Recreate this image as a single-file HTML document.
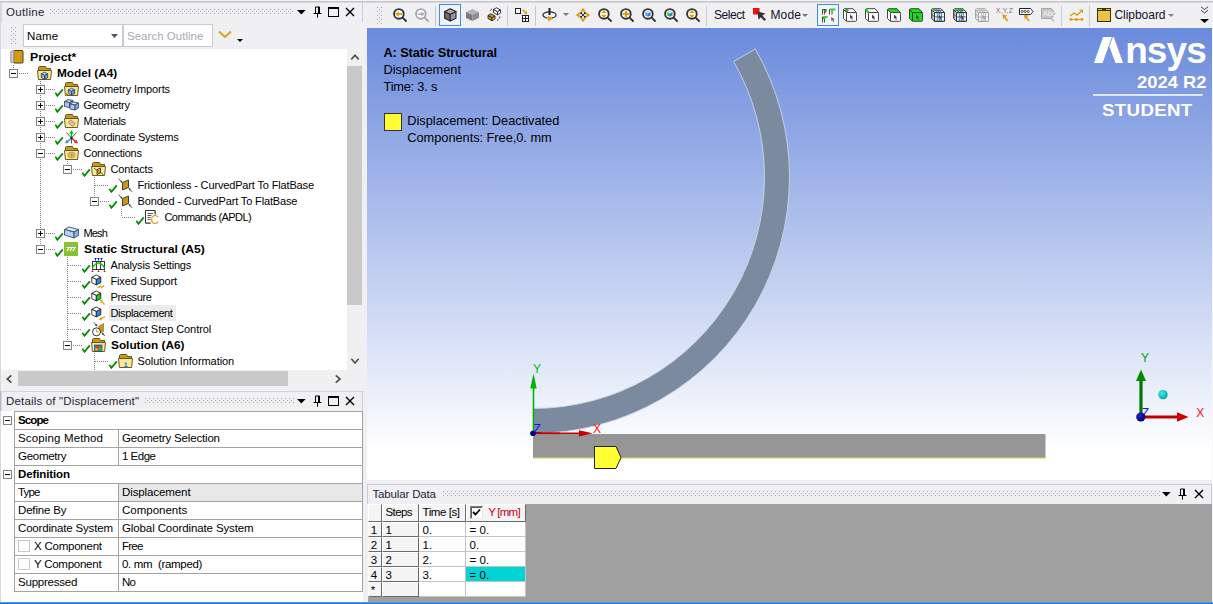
<!DOCTYPE html>
<html><head><meta charset="utf-8"><title>Mechanical</title>
<style>
html,body{margin:0;padding:0;overflow:hidden}
body{width:1213px;height:604px;overflow:hidden;position:relative;background:#f0f0f2;font-family:"Liberation Sans",sans-serif;font-size:12px;color:#000}
div,span,svg{position:absolute;box-sizing:border-box}
.t{white-space:pre;line-height:16px;height:16px}
.tree .t{font-size:11px}
.b{font-weight:bold}
.lg::first-letter{letter-spacing:5.4px;text-shadow:0.6px 0 #fff,1.2px 0 #fff,1.8px 0 #fff,2.4px 0 #fff,3px 0 #fff,3.5px 0 #fff,4px 0 #fff}
</style></head><body>
<svg style="left:0;top:0" width="0" height="0"><defs><pattern id="dp" width="4" height="4" patternUnits="userSpaceOnUse"><rect x="0" y="0" width="1" height="1" fill="#a4a4a8"/><rect x="2" y="2" width="1" height="1" fill="#a4a4a8"/></pattern></defs></svg>

<div style="left:0;top:0;width:1213px;height:1px;background:#f4f4f4"></div><div style="left:0;top:1px;width:1213px;height:1px;background:#c6c6c8"></div><div style="left:0;top:2px;width:1213px;height:1px;background:#d8d8e0"></div>
<div style="left:0;top:2px;width:1px;height:20px;background:#b8b8cc"></div><div style="left:1px;top:2px;width:1px;height:20px;background:#d4d4e0"></div>
<div style="left:362px;top:2px;width:1px;height:20px;background:#cdd0e0"></div>
<span class="t" style="left:6px;top:3px;font-size:11.5px;letter-spacing:0.327px;color:#1e1e3c;line-height:18px;height:18px">Outline</span>
<svg style="position:absolute;left:50px;top:9px" width="243" height="5" shape-rendering="crispEdges"><rect width="243" height="5" fill="url(#dp)"/></svg>
<svg style="position:absolute;left:297.2px;top:10px" width="8.6" height="4.6" viewBox="0 0 8.6 4.6"><polygon points="0,0 8.6,0 4.3,4.6" fill="#000"/></svg><svg style="position:absolute;left:312.9px;top:6px" width="9" height="12" viewBox="0 0 9 12"><path d="M2.5 7V1H6.5V7M5.5 1V7M0.5 7.5H8.5M4.5 8V11.6" stroke="#000" stroke-width="1" fill="none"/></svg><div style="position:absolute;left:328.2px;top:7px;width:11px;height:10px;border:1px solid #000;border-top-width:2px"></div><svg style="position:absolute;left:344.8px;top:6.5px" width="10" height="10" viewBox="0 0 10 10"><path d="M1 1L9 9M9 1L1 9" stroke="#000" stroke-width="1.4"/></svg>
<svg style="position:absolute;left:11px;top:27px" width="5" height="17" shape-rendering="crispEdges"><rect width="5" height="17" fill="url(#dp)"/></svg>
<div style="left:23px;top:24px;width:100px;height:23px;background:#fff;border:1px solid #c8c8d8"></div>
<span class="t" style="left:27px;top:27px;font-size:11.5px;letter-spacing:0.141px;line-height:18px;height:18px">Name</span>
<svg style="position:absolute;left:111px;top:34px" width="7" height="4" viewBox="0 0 7 4"><polygon points="0,0 7,0 3.5,4" fill="#555"/></svg>
<div style="left:123px;top:24px;width:90px;height:23px;background:#fff;border:1px solid #c8c8d8"></div>
<span class="t" style="left:127px;top:27px;font-size:11.5px;letter-spacing:0.025px;line-height:18px;height:18px;color:#a8a8b0">Search Outline</span>
<svg style="left:218px;top:30px" width="14" height="9" viewBox="0 0 14 9"><path d="M1 1.5L7 7L13 1.5" stroke="#d4a017" stroke-width="1.8" fill="none"/></svg>
<svg style="position:absolute;left:237px;top:39px" width="6" height="3" viewBox="0 0 6 3"><polygon points="0,0 6,0 3.0,3" fill="#000"/></svg>
<div class="tree" style="left:1px;top:49px;width:346px;height:321px;background:#fff;overflow:hidden">
<div style="left:12px;top:16px;width:1px;height:5px;background-image:linear-gradient(180deg,#808080 1px,transparent 1px);background-size:1px 2px"></div>
<div style="left:18px;top:24px;width:10px;height:1px;background-image:linear-gradient(90deg,#808080 1px,transparent 1px);background-size:2px 1px"></div>
<div style="left:39px;top:32px;width:1px;height:164px;background-image:linear-gradient(180deg,#808080 1px,transparent 1px);background-size:1px 2px"></div>
<div style="left:45px;top:40px;width:10px;height:1px;background-image:linear-gradient(90deg,#808080 1px,transparent 1px);background-size:2px 1px"></div>
<div style="left:45px;top:56px;width:10px;height:1px;background-image:linear-gradient(90deg,#808080 1px,transparent 1px);background-size:2px 1px"></div>
<div style="left:45px;top:72px;width:10px;height:1px;background-image:linear-gradient(90deg,#808080 1px,transparent 1px);background-size:2px 1px"></div>
<div style="left:45px;top:88px;width:10px;height:1px;background-image:linear-gradient(90deg,#808080 1px,transparent 1px);background-size:2px 1px"></div>
<div style="left:45px;top:104px;width:10px;height:1px;background-image:linear-gradient(90deg,#808080 1px,transparent 1px);background-size:2px 1px"></div>
<div style="left:45px;top:184px;width:10px;height:1px;background-image:linear-gradient(90deg,#808080 1px,transparent 1px);background-size:2px 1px"></div>
<div style="left:45px;top:200px;width:10px;height:1px;background-image:linear-gradient(90deg,#808080 1px,transparent 1px);background-size:2px 1px"></div>
<div style="left:66px;top:112px;width:1px;height:4px;background-image:linear-gradient(180deg,#808080 1px,transparent 1px);background-size:1px 2px"></div>
<div style="left:72px;top:120px;width:10px;height:1px;background-image:linear-gradient(90deg,#808080 1px,transparent 1px);background-size:2px 1px"></div>
<div style="left:93px;top:128px;width:1px;height:20px;background-image:linear-gradient(180deg,#808080 1px,transparent 1px);background-size:1px 2px"></div>
<div style="left:94px;top:136px;width:14px;height:1px;background-image:linear-gradient(90deg,#808080 1px,transparent 1px);background-size:2px 1px"></div>
<div style="left:99px;top:152px;width:10px;height:1px;background-image:linear-gradient(90deg,#808080 1px,transparent 1px);background-size:2px 1px"></div>
<div style="left:120px;top:160px;width:1px;height:8px;background-image:linear-gradient(180deg,#808080 1px,transparent 1px);background-size:1px 2px"></div>
<div style="left:121px;top:168px;width:14px;height:1px;background-image:linear-gradient(90deg,#808080 1px,transparent 1px);background-size:2px 1px"></div>
<div style="left:66px;top:208px;width:1px;height:84px;background-image:linear-gradient(180deg,#808080 1px,transparent 1px);background-size:1px 2px"></div>
<div style="left:67px;top:216px;width:14px;height:1px;background-image:linear-gradient(90deg,#808080 1px,transparent 1px);background-size:2px 1px"></div>
<div style="left:67px;top:232px;width:14px;height:1px;background-image:linear-gradient(90deg,#808080 1px,transparent 1px);background-size:2px 1px"></div>
<div style="left:67px;top:248px;width:14px;height:1px;background-image:linear-gradient(90deg,#808080 1px,transparent 1px);background-size:2px 1px"></div>
<div style="left:67px;top:264px;width:14px;height:1px;background-image:linear-gradient(90deg,#808080 1px,transparent 1px);background-size:2px 1px"></div>
<div style="left:67px;top:280px;width:14px;height:1px;background-image:linear-gradient(90deg,#808080 1px,transparent 1px);background-size:2px 1px"></div>
<div style="left:72px;top:296px;width:10px;height:1px;background-image:linear-gradient(90deg,#808080 1px,transparent 1px);background-size:2px 1px"></div>
<div style="left:93px;top:304px;width:1px;height:17px;background-image:linear-gradient(180deg,#808080 1px,transparent 1px);background-size:1px 2px"></div>
<div style="left:94px;top:312px;width:14px;height:1px;background-image:linear-gradient(90deg,#808080 1px,transparent 1px);background-size:2px 1px"></div>
<svg style="left:9px;top:1px" width="16" height="16" viewBox="0 0 16 16"><rect x="3.5" y="0.5" width="9.5" height="12.5" rx="1" fill="#d19a12" stroke="#4a3a10"/><rect x="0.8" y="0.8" width="3" height="12" rx="1.2" fill="#e8e8e8" stroke="#777" stroke-width="0.8"/><path d="M1 3h2.6M1 5h2.6M1 7h2.6M1 9h2.6M1 11h2.6" stroke="#999" stroke-width="0.6"/></svg>
<span class="t" style="left:29px;top:0px;font-size:11px;font-weight:bold;transform-origin:0 50%;transform:scaleX(1.1137);">Project*</span>
<svg style="left:8.0px;top:20.0px" width="9" height="9" viewBox="0 0 9 9"><rect x="0.5" y="0.5" width="8" height="8" fill="#fff" stroke="#848484"/><path d="M2 4.5h5" stroke="#000"/></svg>
<svg style="left:36px;top:17px" width="16" height="16" viewBox="0 0 16 16"><path d="M1.5 4.5V1.2L2.5 0.5H8.5L9.5 2.5H13.5V4.5Z" fill="#c8981c" stroke="#5a4a20" stroke-width="0.9" stroke-linejoin="round"/><path d="M0.5 4.5H14.5L13.6 13.5H1.4Z" fill="#f8ea90" stroke="#5a4a20" stroke-width="0.9" stroke-linejoin="round"/><g transform="translate(4.3,6.2) scale(0.64)"><polygon points="0,2.5 5,0 10,2.5 5,5" fill="#bcd8f5" stroke="#345" stroke-width="1.3"/><polygon points="0,2.5 5,5 5,11 0,8.5" fill="#8fb8e8" stroke="#345" stroke-width="1.3"/><polygon points="5,5 10,2.5 10,8.5 5,11" fill="#6a9adf" stroke="#345" stroke-width="1.3"/></g></svg>
<span class="t" style="left:56px;top:16px;font-size:11px;font-weight:bold;transform-origin:0 50%;transform:scaleX(1.0726);">Model (A4)</span>
<svg style="left:35.0px;top:36.0px" width="9" height="9" viewBox="0 0 9 9"><rect x="0.5" y="0.5" width="8" height="8" fill="#fff" stroke="#848484"/><path d="M2 4.5h5" stroke="#000"/><path d="M4.5 2v5" stroke="#000"/></svg>
<svg style="left:54px;top:38px" width="9" height="10" viewBox="0 0 9 10"><path d="M0.3 5.7L2.4 8.8L7.8 2.3" stroke="#088a08" stroke-width="1.8" fill="none"/></svg>
<svg style="left:63px;top:33px" width="16" height="16" viewBox="0 0 16 16"><path d="M1.5 4.5V1.2L2.5 0.5H8.5L9.5 2.5H13.5V4.5Z" fill="#c8981c" stroke="#5a4a20" stroke-width="0.9" stroke-linejoin="round"/><path d="M0.5 4.5H14.5L13.6 13.5H1.4Z" fill="#f8ea90" stroke="#5a4a20" stroke-width="0.9" stroke-linejoin="round"/><g transform="translate(4.3,6.2) scale(0.64)"><polygon points="0,2.5 5,0 10,2.5 5,5" fill="#bcd8f5" stroke="#345" stroke-width="1.3"/><polygon points="0,2.5 5,5 5,11 0,8.5" fill="#8fb8e8" stroke="#345" stroke-width="1.3"/><polygon points="5,5 10,2.5 10,8.5 5,11" fill="#6a9adf" stroke="#345" stroke-width="1.3"/></g><path d="M1 12.5h3M2.5 11v3" stroke="#c08010" stroke-width="1"/></svg>
<span class="t" style="left:82.5px;top:32px;font-size:11px;letter-spacing:-0.095px;">Geometry Imports</span>
<svg style="left:35.0px;top:52.0px" width="9" height="9" viewBox="0 0 9 9"><rect x="0.5" y="0.5" width="8" height="8" fill="#fff" stroke="#848484"/><path d="M2 4.5h5" stroke="#000"/><path d="M4.5 2v5" stroke="#000"/></svg>
<svg style="left:54px;top:54px" width="9" height="10" viewBox="0 0 9 10"><path d="M0.3 5.7L2.4 8.8L7.8 2.3" stroke="#088a08" stroke-width="1.8" fill="none"/></svg>
<svg style="left:63px;top:49px" width="16" height="16" viewBox="0 0 16 16"><g stroke="#3a4a66" stroke-width="0.9" stroke-linejoin="round"><polygon points="0.5,3.5 4,1.5 9,2.5 5.5,4.5" fill="#d4e5fb"/><polygon points="0.5,3.5 5.5,4.5 5.5,9.5 0.5,8.5" fill="#a9c9f2"/><polygon points="5.5,4.5 9,2.5 9,7.5 5.5,9.5" fill="#7eaae6"/><polygon points="6,6 9.5,4 14.5,5 11,7" fill="#d4e5fb"/><polygon points="6,6 11,7 11,12 6,11" fill="#a9c9f2"/><polygon points="11,7 14.5,5 14.5,10 11,12" fill="#7eaae6"/></g></svg>
<span class="t" style="left:82.5px;top:48px;font-size:11px;letter-spacing:-0.27px;">Geometry</span>
<svg style="left:35.0px;top:68.0px" width="9" height="9" viewBox="0 0 9 9"><rect x="0.5" y="0.5" width="8" height="8" fill="#fff" stroke="#848484"/><path d="M2 4.5h5" stroke="#000"/><path d="M4.5 2v5" stroke="#000"/></svg>
<svg style="left:54px;top:70px" width="9" height="10" viewBox="0 0 9 10"><path d="M0.3 5.7L2.4 8.8L7.8 2.3" stroke="#088a08" stroke-width="1.8" fill="none"/></svg>
<svg style="left:63px;top:65px" width="16" height="16" viewBox="0 0 16 16"><path d="M1.5 4.5V1.2L2.5 0.5H8.5L9.5 2.5H13.5V4.5Z" fill="#c8981c" stroke="#5a4a20" stroke-width="0.9" stroke-linejoin="round"/><path d="M0.5 4.5H14.5L13.6 13.5H1.4Z" fill="#f8ea90" stroke="#5a4a20" stroke-width="0.9" stroke-linejoin="round"/><g transform="rotate(40 7.5 9)"><rect x="4.8" y="7" width="6" height="3.8" rx="0.8" fill="#ecb898" stroke="#a87050" stroke-width="0.7"/></g></svg>
<span class="t" style="left:82.5px;top:64px;font-size:11px;letter-spacing:-0.253px;">Materials</span>
<svg style="left:35.0px;top:84.0px" width="9" height="9" viewBox="0 0 9 9"><rect x="0.5" y="0.5" width="8" height="8" fill="#fff" stroke="#848484"/><path d="M2 4.5h5" stroke="#000"/><path d="M4.5 2v5" stroke="#000"/></svg>
<svg style="left:54px;top:86px" width="9" height="10" viewBox="0 0 9 10"><path d="M0.3 5.7L2.4 8.8L7.8 2.3" stroke="#088a08" stroke-width="1.8" fill="none"/></svg>
<svg style="left:63px;top:81px" width="16" height="16" viewBox="0 0 16 16"><path d="M2.5 2.5L7 7.5M12.5 2.5L8 7.5M7.5 8.5v5" stroke="#444" stroke-width="0.9"/><path d="M7.5 8V3" stroke="#10b010" stroke-width="1.3"/><polygon points="7.5,0 5.3,3.8 9.7,3.8" fill="#10c010"/><path d="M7.5 8L11.5 11.5" stroke="#e01010" stroke-width="1.3"/><polygon points="14,13.4 9.9,12.6 12.6,9.7" fill="#f01818"/><path d="M7.5 8L3.5 11.5" stroke="#3080e0" stroke-width="1.3"/><polygon points="1,13.4 5.1,12.6 2.4,9.7" fill="#3a8cf0"/><circle cx="7.5" cy="8" r="1.2" fill="#222"/></svg>
<span class="t" style="left:82.5px;top:80px;font-size:11px;letter-spacing:-0.226px;">Coordinate Systems</span>
<svg style="left:35.0px;top:100.0px" width="9" height="9" viewBox="0 0 9 9"><rect x="0.5" y="0.5" width="8" height="8" fill="#fff" stroke="#848484"/><path d="M2 4.5h5" stroke="#000"/></svg>
<svg style="left:54px;top:102px" width="9" height="10" viewBox="0 0 9 10"><path d="M0.3 5.7L2.4 8.8L7.8 2.3" stroke="#088a08" stroke-width="1.8" fill="none"/></svg>
<svg style="left:63px;top:97px" width="16" height="16" viewBox="0 0 16 16"><path d="M1.5 4.5V1.2L2.5 0.5H8.5L9.5 2.5H13.5V4.5Z" fill="#c8981c" stroke="#5a4a20" stroke-width="0.9" stroke-linejoin="round"/><path d="M0.5 4.5H14.5L13.6 13.5H1.4Z" fill="#f8ea90" stroke="#5a4a20" stroke-width="0.9" stroke-linejoin="round"/><ellipse cx="7.5" cy="9" rx="3.8" ry="2.8" fill="#ecd070" stroke="#b08828" stroke-width="0.7"/><path d="M4.5 9h6M7.5 6.8v4.4M5.2 7.4l4.6 3.2M9.8 7.4l-4.6 3.2" stroke="#b08828" stroke-width="0.5"/></svg>
<span class="t" style="left:82.5px;top:96px;font-size:11px;letter-spacing:-0.275px;">Connections</span>
<svg style="left:35.0px;top:180.0px" width="9" height="9" viewBox="0 0 9 9"><rect x="0.5" y="0.5" width="8" height="8" fill="#fff" stroke="#848484"/><path d="M2 4.5h5" stroke="#000"/><path d="M4.5 2v5" stroke="#000"/></svg>
<svg style="left:54px;top:182px" width="9" height="10" viewBox="0 0 9 10"><path d="M0.3 5.7L2.4 8.8L7.8 2.3" stroke="#088a08" stroke-width="1.8" fill="none"/></svg>
<svg style="left:63px;top:177px" width="16" height="16" viewBox="0 0 16 16"><g stroke="#3a4a66" stroke-width="0.9" stroke-linejoin="round"><polygon points="0.5,3.5 5,1 14.5,3.5 10,6" fill="#dbe9fb"/><polygon points="0.5,3.5 10,6 10,12 0.5,9" fill="#b7d2f4"/><polygon points="10,6 14.5,3.5 14.5,9.5 10,12" fill="#8cb4ea"/></g></svg>
<span class="t" style="left:82.5px;top:176px;font-size:11px;letter-spacing:-0.833px;">Mesh</span>
<svg style="left:35.0px;top:196.0px" width="9" height="9" viewBox="0 0 9 9"><rect x="0.5" y="0.5" width="8" height="8" fill="#fff" stroke="#848484"/><path d="M2 4.5h5" stroke="#000"/></svg>
<svg style="left:54px;top:198px" width="9" height="10" viewBox="0 0 9 10"><path d="M0.3 5.7L2.4 8.8L7.8 2.3" stroke="#088a08" stroke-width="1.8" fill="none"/></svg>
<svg style="left:63px;top:193px" width="16" height="16" viewBox="0 0 16 16"><rect x="0" y="0" width="14" height="14" fill="#86c232"/><path d="M2.5 5.5h9.5M5 5.5L3 9M8 5.5L6 9M11 5.5L9 9" stroke="#fff" stroke-width="1.2" fill="none"/></svg>
<span class="t" style="left:82.5px;top:192px;font-size:11px;font-weight:bold;transform-origin:0 50%;transform:scaleX(1.1050);">Static Structural (A5)</span>
<svg style="left:62.0px;top:116.0px" width="9" height="9" viewBox="0 0 9 9"><rect x="0.5" y="0.5" width="8" height="8" fill="#fff" stroke="#848484"/><path d="M2 4.5h5" stroke="#000"/></svg>
<svg style="left:81px;top:118px" width="9" height="10" viewBox="0 0 9 10"><path d="M0.3 5.7L2.4 8.8L7.8 2.3" stroke="#088a08" stroke-width="1.8" fill="none"/></svg>
<svg style="left:90px;top:113px" width="16" height="16" viewBox="0 0 16 16"><path d="M1.5 4.5V1.2L2.5 0.5H8.5L9.5 2.5H13.5V4.5Z" fill="#c8981c" stroke="#5a4a20" stroke-width="0.9" stroke-linejoin="round"/><path d="M0.5 4.5H14.5L13.6 13.5H1.4Z" fill="#f8ea90" stroke="#5a4a20" stroke-width="0.9" stroke-linejoin="round"/><polygon points="6,7.5 9.5,6 9.5,11 6,12.5" fill="#c9961c" stroke="#222" stroke-width="0.7"/><path d="M3 6L6 8.5M12.5 13L9.8 10.6" stroke="#333" stroke-width="0.8"/></svg>
<span class="t" style="left:109.5px;top:112px;font-size:11px;letter-spacing:-0.13px;">Contacts</span>
<svg style="left:108px;top:134px" width="9" height="10" viewBox="0 0 9 10"><path d="M0.3 5.7L2.4 8.8L7.8 2.3" stroke="#088a08" stroke-width="1.8" fill="none"/></svg>
<svg style="left:117px;top:129px" width="16" height="16" viewBox="0 0 16 16"><polygon points="4.5,4.5 10.5,2 10.5,9.5 4.5,12" fill="#c9961c" stroke="#333" stroke-width="0.9" stroke-linejoin="round"/><path d="M0.5 0.8L4 4.2M14 13.8L11 10.6" stroke="#333" stroke-width="0.9"/><polygon points="4.6,4.8 2.2,4 3.8,2.4" fill="#333"/><polygon points="10.6,10 12.8,10.8 11.4,12.4" fill="#333"/></svg>
<span class="t" style="left:136.5px;top:128px;font-size:11px;letter-spacing:-0.152px;">Frictionless - CurvedPart To FlatBase</span>
<svg style="left:89.0px;top:148.0px" width="9" height="9" viewBox="0 0 9 9"><rect x="0.5" y="0.5" width="8" height="8" fill="#fff" stroke="#848484"/><path d="M2 4.5h5" stroke="#000"/></svg>
<svg style="left:108px;top:150px" width="9" height="10" viewBox="0 0 9 10"><path d="M0.3 5.7L2.4 8.8L7.8 2.3" stroke="#088a08" stroke-width="1.8" fill="none"/></svg>
<svg style="left:117px;top:145px" width="16" height="16" viewBox="0 0 16 16"><polygon points="4.5,4.5 10.5,2 10.5,9.5 4.5,12" fill="#c9961c" stroke="#333" stroke-width="0.9" stroke-linejoin="round"/><path d="M0.5 0.8L4 4.2M14 13.8L11 10.6" stroke="#333" stroke-width="0.9"/><polygon points="4.6,4.8 2.2,4 3.8,2.4" fill="#333"/><polygon points="10.6,10 12.8,10.8 11.4,12.4" fill="#333"/></svg>
<span class="t" style="left:136.5px;top:144px;font-size:11px;letter-spacing:-0.143px;">Bonded - CurvedPart To FlatBase</span>
<svg style="left:135px;top:166px" width="9" height="10" viewBox="0 0 9 10"><path d="M0.3 5.7L2.4 8.8L7.8 2.3" stroke="#088a08" stroke-width="1.8" fill="none"/></svg>
<svg style="left:144px;top:161px" width="16" height="16" viewBox="0 0 16 16"><path d="M0.5 0.5h9.5v4M0.5 0.5v12.5h5" fill="#fff" stroke="#333" stroke-width="1"/><rect x="0.5" y="0.5" width="9.5" height="12.5" fill="#fff" stroke="none"/><path d="M0.5 13V0.5h9.5v4" fill="none" stroke="#333"/><path d="M0.5 13h5" stroke="#333"/><path d="M2.5 3.5h5.5M2.5 5.5h4M2.5 7.5h3M2.5 9.5h3" stroke="#444" stroke-width="0.9"/><text x="5.6" y="14" font-family="Liberation Sans,sans-serif" font-size="12" fill="#d8a010">C</text></svg>
<span class="t" style="left:163.5px;top:160px;font-size:11px;letter-spacing:-0.59px;">Commands (APDL)</span>
<div style="left:108px;top:256px;width:67px;height:16px;background:#ebebeb"></div>
<svg style="left:81px;top:214px" width="9" height="10" viewBox="0 0 9 10"><path d="M0.3 5.7L2.4 8.8L7.8 2.3" stroke="#088a08" stroke-width="1.8" fill="none"/></svg>
<svg style="left:90px;top:209px" width="16" height="16" viewBox="0 0 16 16"><path d="M1.5 3v9M5.5 3v9M9.5 3v9M13.5 3v9M1.5 3.5h12M1.5 11.5h12" stroke="#222" stroke-width="0.9" fill="none"/><path d="M4.5 0.5v2M7.5 0.5v2M10.5 0.5v2M3.5 0.5h2M6.5 0.5h2M9.5 0.5h2" stroke="#1010e0" stroke-width="1"/><path d="M1 10.5Q7.5 -0.5 14 10.5" stroke="#10c010" stroke-width="1.3" fill="none"/><path d="M1.5 12l-1.2 2h2.4zM7.5 12l-1.2 2h2.4zM13.5 12l-1.2 2h2.4z" fill="#e01010"/></svg>
<span class="t" style="left:109.5px;top:208px;font-size:11px;letter-spacing:-0.185px;">Analysis Settings</span>
<svg style="left:81px;top:230px" width="9" height="10" viewBox="0 0 9 10"><path d="M0.3 5.7L2.4 8.8L7.8 2.3" stroke="#088a08" stroke-width="1.8" fill="none"/></svg>
<svg style="left:90px;top:225px" width="16" height="16" viewBox="0 0 16 16"><g transform="translate(0.8,1) scale(0.9)" stroke="#222" stroke-width="1.0" stroke-linejoin="round"><polygon points="0,2.5 5,0 10,2.5 5,5" fill="#fff"/><polygon points="0,2.5 5,5 5,11 0,8.5" fill="#fff"/><polygon points="5,5 10,2.5 10,8.5 5,11" fill="#2a8ae6"/></g><path d="M7 14L10 11.5M10 14L13 11.5" stroke="#d8a010" stroke-width="1.4"/></svg>
<span class="t" style="left:109.5px;top:224px;font-size:11px;letter-spacing:-0.157px;">Fixed Support</span>
<svg style="left:81px;top:246px" width="9" height="10" viewBox="0 0 9 10"><path d="M0.3 5.7L2.4 8.8L7.8 2.3" stroke="#088a08" stroke-width="1.8" fill="none"/></svg>
<svg style="left:90px;top:241px" width="16" height="16" viewBox="0 0 16 16"><g transform="translate(0.8,1) scale(0.9)" stroke="#222" stroke-width="1.0" stroke-linejoin="round"><polygon points="0,2.5 5,0 10,2.5 5,5" fill="#fff"/><polygon points="0,2.5 5,5 5,11 0,8.5" fill="#fff"/><polygon points="5,5 10,2.5 10,8.5 5,11" fill="#18d018"/></g><path d="M13.5 14.5L10 11" stroke="#d8a010" stroke-width="1.3"/><polygon points="9,10 12.2,10.6 9.6,13.2" fill="#d8a010"/></svg>
<span class="t" style="left:109.5px;top:240px;font-size:11px;letter-spacing:-0.374px;">Pressure</span>
<svg style="left:81px;top:262px" width="9" height="10" viewBox="0 0 9 10"><path d="M0.3 5.7L2.4 8.8L7.8 2.3" stroke="#088a08" stroke-width="1.8" fill="none"/></svg>
<svg style="left:90px;top:257px" width="16" height="16" viewBox="0 0 16 16"><g transform="translate(0.8,1) scale(0.9)" stroke="#222" stroke-width="1.0" stroke-linejoin="round"><polygon points="0,2.5 5,0 10,2.5 5,5" fill="#fff"/><polygon points="0,2.5 5,5 5,11 0,8.5" fill="#fff"/><polygon points="5,5 10,2.5 10,8.5 5,11" fill="#2a8ae6"/></g><path d="M14 10.5L9.5 13" stroke="#d8a010" stroke-width="1.3"/><polygon points="7.5,14 10,10.8 11.4,13.6" fill="#d8a010"/></svg>
<span class="t" style="left:109.5px;top:256px;font-size:11px;letter-spacing:-0.385px;">Displacement</span>
<svg style="left:81px;top:278px" width="9" height="10" viewBox="0 0 9 10"><path d="M0.3 5.7L2.4 8.8L7.8 2.3" stroke="#088a08" stroke-width="1.8" fill="none"/></svg>
<svg style="left:90px;top:273px" width="16" height="16" viewBox="0 0 16 16"><polygon points="7.5,4.5 12.5,1.5 12.5,9.5 10,10.5" fill="#c9961c" stroke="#8a6a10" stroke-width="0.6"/><circle cx="5.5" cy="9.8" r="4" fill="#fff" stroke="#333" stroke-width="1"/><path d="M5.5 7.3v2.7h2.2" stroke="#d8a010" stroke-width="1" fill="none"/><path d="M3 0.5L5.6 3.4M13.8 14L11.4 11.4" stroke="#333" stroke-width="0.9"/><polygon points="6.4,4.4 3.9,3.6 5.6,2" fill="#333"/><polygon points="10.6,10.4 13,11.4 11.4,12.9" fill="#333"/></svg>
<span class="t" style="left:109.5px;top:272px;font-size:11px;letter-spacing:-0.074px;">Contact Step Control</span>
<svg style="left:62.0px;top:292.0px" width="9" height="9" viewBox="0 0 9 9"><rect x="0.5" y="0.5" width="8" height="8" fill="#fff" stroke="#848484"/><path d="M2 4.5h5" stroke="#000"/></svg>
<svg style="left:81px;top:294px" width="9" height="10" viewBox="0 0 9 10"><path d="M0.3 5.7L2.4 8.8L7.8 2.3" stroke="#088a08" stroke-width="1.8" fill="none"/></svg>
<svg style="left:90px;top:289px" width="16" height="16" viewBox="0 0 16 16"><path d="M1.5 4.5V1.2L2.5 0.5H8.5L9.5 2.5H13.5V4.5Z" fill="#c8981c" stroke="#5a4a20" stroke-width="0.9" stroke-linejoin="round"/><path d="M0.5 4.5H14.5L13.6 13.5H1.4Z" fill="#f8ea90" stroke="#5a4a20" stroke-width="0.9" stroke-linejoin="round"/><rect x="3.5" y="7" width="7.5" height="6" fill="#3a7ad0" stroke="#234" stroke-width="0.6"/><rect x="5" y="8" width="3" height="3" fill="#e83030"/><rect x="7.5" y="9.5" width="3" height="3" fill="#30c030"/><rect x="4.2" y="10.5" width="2.5" height="2" fill="#f0d020"/></svg>
<span class="t" style="left:109.5px;top:288px;font-size:11px;font-weight:bold;transform-origin:0 50%;transform:scaleX(1.0740);">Solution (A6)</span>
<svg style="left:108px;top:310px" width="9" height="10" viewBox="0 0 9 10"><path d="M0.3 5.7L2.4 8.8L7.8 2.3" stroke="#088a08" stroke-width="1.8" fill="none"/></svg>
<svg style="left:117px;top:305px" width="16" height="16" viewBox="0 0 16 16"><path d="M1.5 4.5V1.2L2.5 0.5H8.5L9.5 2.5H13.5V4.5Z" fill="#c8981c" stroke="#5a4a20" stroke-width="0.9" stroke-linejoin="round"/><path d="M0.5 4.5H14.5L13.6 13.5H1.4Z" fill="#f8ea90" stroke="#5a4a20" stroke-width="0.9" stroke-linejoin="round"/><text x="5.3" y="13.2" font-family="Liberation Mono,monospace" font-weight="bold" font-size="8" fill="#3a80f0">i</text></svg>
<span class="t" style="left:136.5px;top:304px;font-size:11px;letter-spacing:-0.06px;">Solution Information</span>
</div>
<div style="left:347px;top:49px;width:16px;height:321px;background:#f0f0f0"></div>
<svg style="left:350px;top:53px" width="10" height="8" viewBox="0 0 10 8"><path d="M1.3 6.4L5 2.2L8.7 6.4" stroke="#505050" stroke-width="1.7" fill="none"/></svg>
<svg style="left:350px;top:357px" width="10" height="8" viewBox="0 0 10 8"><path d="M1.3 1.8L5 6L8.7 1.8" stroke="#505050" stroke-width="1.7" fill="none"/></svg>
<div style="left:347px;top:66px;width:15px;height:239px;background:#c9c9c9"></div>
<div style="left:1px;top:370px;width:346px;height:17px;background:#f0f0f0"></div>
<svg style="left:5px;top:374px" width="8" height="10" viewBox="0 0 8 10"><path d="M6.4 1.3L2.2 5L6.4 8.7" stroke="#505050" stroke-width="1.7" fill="none"/></svg>
<svg style="left:334px;top:374px" width="8" height="10" viewBox="0 0 8 10"><path d="M1.8 1.3L6 5L1.8 8.7" stroke="#505050" stroke-width="1.7" fill="none"/></svg>
<div style="left:18px;top:371px;width:270px;height:15px;background:#c9c9c9"></div>
<div style="left:0;top:391px;width:364px;height:1px;background:#d4d4e4"></div>
<div style="left:0;top:2px;width:1px;height:600px;background:#d6d6e4"></div>
<div style="left:1px;top:411px;width:362px;height:191px;background:#fff"></div>
<div style="left:0;top:392px;width:363px;height:19px;border-right:1px solid #c8cce0"></div>
<div style="left:0;top:391px;width:1px;height:20px;background:#b8b8cc"></div><div style="left:1px;top:391px;width:1px;height:20px;background:#d4d4e0"></div>
<span class="t" style="left:6px;top:392px;font-size:11.5px;letter-spacing:0.168px;color:#1e1e3c;line-height:18px;height:18px">Details of "Displacement"</span>
<svg style="position:absolute;left:145px;top:398px" width="149" height="5" shape-rendering="crispEdges"><rect width="149" height="5" fill="url(#dp)"/></svg>
<svg style="position:absolute;left:297.2px;top:399px" width="8.6" height="4.6" viewBox="0 0 8.6 4.6"><polygon points="0,0 8.6,0 4.3,4.6" fill="#000"/></svg><svg style="position:absolute;left:312.9px;top:395px" width="9" height="12" viewBox="0 0 9 12"><path d="M2.5 7V1H6.5V7M5.5 1V7M0.5 7.5H8.5M4.5 8V11.6" stroke="#000" stroke-width="1" fill="none"/></svg><div style="position:absolute;left:328.2px;top:396px;width:11px;height:10px;border:1px solid #000;border-top-width:2px"></div><svg style="position:absolute;left:344.8px;top:395.5px" width="10" height="10" viewBox="0 0 10 10"><path d="M1 1L9 9M9 1L1 9" stroke="#000" stroke-width="1.4"/></svg>
<div style="left:14px;top:411px;width:349px;height:181px;background:#fff;border:1px solid #a3a3a3"></div>
<svg style="left:3px;top:416px" width="9" height="9" viewBox="0 0 9 9"><rect x="0.5" y="0.5" width="8" height="8" fill="#fff" stroke="#848484"/><path d="M2 4.5h5" stroke="#000"/></svg>
<span class="t" style="left:18px;top:411px;font-size:11.5px;font-weight:bold;letter-spacing:-0.878px;line-height:18px;height:18px">Scope</span>
<div style="left:14px;top:429px;width:349px;height:1px;background:#a3a3a3"></div>
<div style="left:118px;top:429px;width:1px;height:18px;background:#a3a3a3"></div>
<span class="t" style="left:18px;top:429px;font-size:11.5px;letter-spacing:0.145px;line-height:18px;height:18px">Scoping Method</span>
<span class="t" style="left:122px;top:429px;font-size:11.5px;letter-spacing:-0.176px;line-height:18px;height:18px">Geometry Selection</span>
<div style="left:14px;top:447px;width:349px;height:1px;background:#a3a3a3"></div>
<div style="left:118px;top:447px;width:1px;height:18px;background:#a3a3a3"></div>
<span class="t" style="left:18px;top:447px;font-size:11.5px;letter-spacing:-0.284px;line-height:18px;height:18px">Geometry</span>
<span class="t" style="left:122px;top:447px;font-size:11.5px;letter-spacing:-0.49px;line-height:18px;height:18px">1 Edge</span>
<div style="left:14px;top:465px;width:349px;height:1px;background:#a3a3a3"></div>
<svg style="left:3px;top:470px" width="9" height="9" viewBox="0 0 9 9"><rect x="0.5" y="0.5" width="8" height="8" fill="#fff" stroke="#848484"/><path d="M2 4.5h5" stroke="#000"/></svg>
<span class="t" style="left:18px;top:465px;font-size:11.5px;font-weight:bold;letter-spacing:-0.113px;line-height:18px;height:18px">Definition</span>
<div style="left:14px;top:483px;width:349px;height:1px;background:#a3a3a3"></div>
<div style="left:119px;top:484px;width:243px;height:17px;background:#e8e8e8"></div>
<div style="left:118px;top:483px;width:1px;height:18px;background:#a3a3a3"></div>
<span class="t" style="left:18px;top:483px;font-size:11.5px;letter-spacing:-0.811px;line-height:18px;height:18px">Type</span>
<span class="t" style="left:122px;top:483px;font-size:11.5px;letter-spacing:-0.097px;line-height:18px;height:18px">Displacement</span>
<div style="left:14px;top:501px;width:349px;height:1px;background:#a3a3a3"></div>
<div style="left:118px;top:501px;width:1px;height:18px;background:#a3a3a3"></div>
<span class="t" style="left:18px;top:501px;font-size:11.5px;letter-spacing:-0.17px;line-height:18px;height:18px">Define By</span>
<span class="t" style="left:122px;top:501px;font-size:11.5px;letter-spacing:-0.0px;line-height:18px;height:18px">Components</span>
<div style="left:14px;top:519px;width:349px;height:1px;background:#a3a3a3"></div>
<div style="left:118px;top:519px;width:1px;height:18px;background:#a3a3a3"></div>
<span class="t" style="left:18px;top:519px;font-size:11.5px;letter-spacing:-0.175px;line-height:18px;height:18px">Coordinate System</span>
<span class="t" style="left:122px;top:519px;font-size:11.5px;letter-spacing:-0.11px;line-height:18px;height:18px">Global Coordinate System</span>
<div style="left:14px;top:537px;width:349px;height:1px;background:#a3a3a3"></div>
<div style="left:118px;top:537px;width:1px;height:18px;background:#a3a3a3"></div>
<div style="left:18px;top:540px;width:12px;height:12px;background:#fff;border:1px solid #c8c8c8"></div>
<span class="t" style="left:34px;top:537px;font-size:11.5px;letter-spacing:-0.232px;line-height:18px;height:18px">X Component</span>
<span class="t" style="left:122px;top:537px;font-size:11.5px;letter-spacing:-0.782px;line-height:18px;height:18px">Free</span>
<div style="left:14px;top:555px;width:349px;height:1px;background:#a3a3a3"></div>
<div style="left:118px;top:555px;width:1px;height:18px;background:#a3a3a3"></div>
<div style="left:18px;top:558px;width:12px;height:12px;background:#fff;border:1px solid #c8c8c8"></div>
<span class="t" style="left:34px;top:555px;font-size:11.5px;letter-spacing:-0.251px;line-height:18px;height:18px">Y Component</span>
<span class="t" style="left:122px;top:555px;font-size:11.5px;letter-spacing:-0.328px;line-height:18px;height:18px">0. mm  (ramped)</span>
<div style="left:14px;top:573px;width:349px;height:1px;background:#a3a3a3"></div>
<div style="left:118px;top:573px;width:1px;height:18px;background:#a3a3a3"></div>
<span class="t" style="left:18px;top:573px;font-size:11.5px;letter-spacing:-0.219px;line-height:18px;height:18px">Suppressed</span>
<span class="t" style="left:122px;top:573px;font-size:11.5px;letter-spacing:-0.801px;line-height:18px;height:18px">No</span>
<svg style="left:377px;top:7px" width="5" height="17" shape-rendering="crispEdges"><rect width="5" height="17" fill="url(#dp)"/></svg>
<svg style="left:393px;top:8px" width="15" height="15" viewBox="0 0 15 15"><circle cx="5.9" cy="5.9" r="4.8" fill="#fff" stroke="#333" stroke-width="1.9"/><path d="M9.6 9.6L13 13" stroke="#333" stroke-width="1.9" stroke-linecap="round"/><path d="M9 6H4" stroke="#d8a010" stroke-width="1.8"/><polygon points="2.2,6 5.6,3.2 5.6,8.8" fill="#d8a010"/></svg>
<svg style="left:415px;top:8px" width="15" height="15" viewBox="0 0 15 15"><circle cx="5.9" cy="5.9" r="4.8" fill="#fff" stroke="#a8a8a8" stroke-width="1.9"/><path d="M9.6 9.6L13 13" stroke="#a8a8a8" stroke-width="1.9" stroke-linecap="round"/><path d="M3 6H8" stroke="#b0b0b0" stroke-width="1.8"/><polygon points="9.8,6 6.4,3.2 6.4,8.8" fill="#b0b0b0"/></svg>
<div style="left:435px;top:6px;width:1px;height:20px;background:#c6c6ce"></div>
<div style="left:439px;top:4px;width:22px;height:22px;background:#f3f3f7;border:1px solid #3b8df0"></div>
<svg style="left:444px;top:8px" width="13" height="14" viewBox="0 0 13 14"><g stroke="#2a2a2a" stroke-width="1.1" stroke-linejoin="round"><polygon points="0.6,3.6 6.3,0.8 12,3.6 6.3,6.4" fill="#aaaaaa"/><polygon points="0.6,3.6 6.3,6.4 6.3,13 0.6,10.2" fill="#6c6c6c"/><polygon points="6.3,6.4 12,3.6 12,10.2 6.3,13" fill="#989898"/></g></svg>
<svg style="left:466px;top:9px" width="13" height="12" viewBox="0 0 13 12"><polygon points="0,3 6.5,0 13,3 6.5,6" fill="#b4b4b4"/><polygon points="0,3 6.5,6 6.5,12 0,9" fill="#7a7a7a"/><polygon points="6.5,6 13,3 13,9 6.5,12" fill="#8e8e8e"/></svg>
<svg style="left:487px;top:7px" width="15" height="15" viewBox="0 0 15 15"><g stroke="#222" stroke-width="0.9" stroke-linejoin="round"><polygon points="6.5,2.5 9.5,0.8 13.5,3 10.5,4.8" fill="#fff"/><polygon points="6.5,2.5 10.5,4.8 10.5,7.8 6.5,5.5" fill="#fff"/><polygon points="10.5,4.8 13.5,3 13.5,6 10.5,7.8" fill="#fff"/><polygon points="1,8.5 4,6.8 8,9 5,10.8" fill="#d8a010"/><polygon points="1,8.5 5,10.8 5,13.8 1,11.5" fill="#d8a010"/><polygon points="5,10.8 8,9 8,12 5,13.8" fill="#f0c030"/></g><path d="M3.5 3.5A6 6 0 0 1 6 1.2" stroke="#222" fill="none" stroke-width="1" stroke-dasharray="2 1.2"/><path d="M13 9.5A6 6 0 0 1 10 13.5" stroke="#222" fill="none" stroke-width="1" stroke-dasharray="2 1.2"/></svg>
<div style="left:507px;top:6px;width:1px;height:20px;background:#c6c6ce"></div>
<svg style="left:515px;top:8px" width="15" height="15" viewBox="0 0 15 15"><rect x="0.5" y="0.5" width="5" height="5" fill="#fff" stroke="#222"/><rect x="7.5" y="7.5" width="6" height="6" fill="#fff" stroke="#222"/><path d="M7.5 10.5h6M10.5 7.5v6" stroke="#222"/><path d="M7.5 1.5L11 5" stroke="#d8a010" stroke-width="1.4"/><polygon points="12.2,6.2 8.8,5.6 11.6,2.8" fill="#d8a010"/></svg>
<div style="left:535px;top:6px;width:1px;height:20px;background:#c6c6ce"></div>
<svg style="left:542px;top:7px" width="16" height="16" viewBox="0 0 16 16"><ellipse cx="7.5" cy="8" rx="6.6" ry="3.1" fill="none" stroke="#222" stroke-width="1.2"/><path d="M7.5 1v7" stroke="#222" stroke-width="2"/><rect x="5.5" y="9.5" width="4" height="3" fill="#f0f0f2"/><polygon points="6,8.8 11,11.6 6,14.6" fill="#d8a010"/></svg>
<svg style="left:563px;top:13px" width="6" height="3" viewBox="0 0 6 3"><polygon points="0,0 6,0 3.0,3" fill="#707890"/></svg>
<svg style="left:576px;top:8px" width="14" height="14" viewBox="0 0 14 14"><polygon points="7,0 10.2,3.6 3.8,3.6" fill="#d8a010"/><polygon points="7,14 10.2,10.4 3.8,10.4" fill="#d8a010"/><polygon points="0,7 3.6,3.8 3.6,10.2" fill="#d8a010"/><polygon points="14,7 10.4,3.8 10.4,10.2" fill="#d8a010"/><rect x="4.3" y="4.3" width="1.8" height="1.8" fill="#111"/><rect x="7.9" y="4.3" width="1.8" height="1.8" fill="#111"/><rect x="4.3" y="7.9" width="1.8" height="1.8" fill="#111"/><rect x="7.9" y="7.9" width="1.8" height="1.8" fill="#111"/><rect x="6.1" y="6.1" width="1.8" height="1.8" fill="#111"/></svg>
<svg style="left:598px;top:8px" width="15" height="15" viewBox="0 0 15 15"><circle cx="5.9" cy="5.9" r="4.8" fill="#fff" stroke="#333" stroke-width="1.9"/><path d="M9.6 9.6L13 13" stroke="#333" stroke-width="1.9" stroke-linecap="round"/><polygon points="5.9,1.9 8.8,5.1 3,5.1" fill="#d8a010"/><polygon points="5.9,9.9 8.8,6.7 3,6.7" fill="#d8a010"/></svg>
<svg style="left:620px;top:8px" width="15" height="15" viewBox="0 0 15 15"><circle cx="5.9" cy="5.9" r="4.8" fill="#fff" stroke="#333" stroke-width="1.9"/><path d="M9.6 9.6L13 13" stroke="#333" stroke-width="1.9" stroke-linecap="round"/><path d="M6 3v6M3 6h6" stroke="#d8a010" stroke-width="2.2"/></svg>
<svg style="left:642px;top:8px" width="15" height="15" viewBox="0 0 15 15"><circle cx="5.9" cy="5.9" r="4.8" fill="#fff" stroke="#333" stroke-width="1.9"/><path d="M9.6 9.6L13 13" stroke="#333" stroke-width="1.9" stroke-linecap="round"/><polygon points="3.3,4.6 5.9,3.4 8.5,4.6 5.9,5.8" fill="#fff" stroke="#3a6ab8" stroke-width="0.5"/><polygon points="3.3,4.6 5.9,5.8 5.9,8.8 3.3,7.6" fill="#5a9af0"/><polygon points="5.9,5.8 8.5,4.6 8.5,7.6 5.9,8.8" fill="#3a7ad8"/></svg>
<svg style="left:664px;top:8px" width="15" height="15" viewBox="0 0 15 15"><circle cx="5.9" cy="5.9" r="4.8" fill="#fff" stroke="#333" stroke-width="1.9"/><path d="M9.6 9.6L13 13" stroke="#333" stroke-width="1.9" stroke-linecap="round"/><polygon points="3.3,4.6 5.9,3.4 8.5,4.6 5.9,5.8" fill="#fff" stroke="#3a6ab8" stroke-width="0.5"/><polygon points="3.3,4.6 5.9,5.8 5.9,8.8 3.3,7.6" fill="#18d018"/><polygon points="5.9,5.8 8.5,4.6 8.5,7.6 5.9,8.8" fill="#3a7ad8"/></svg>
<svg style="left:686px;top:8px" width="15" height="15" viewBox="0 0 15 15"><circle cx="5.9" cy="5.9" r="4.8" fill="#fff" stroke="#333" stroke-width="1.9"/><path d="M9.6 9.6L13 13" stroke="#333" stroke-width="1.9" stroke-linecap="round"/><polygon points="5.9,1.9 8.8,5.1 3,5.1" fill="#d8a010"/><polygon points="5.9,9.9 8.8,6.7 3,6.7" fill="#d8a010"/></svg>
<div style="left:706px;top:6px;width:1px;height:20px;background:#c6c6ce"></div>
<span class="t" style="left:714px;top:6px;font-size:12px;line-height:18px;height:18px;color:#12122a;letter-spacing:-0.47px">Select</span>
<svg style="left:753px;top:8px" width="14" height="14" viewBox="0 0 14 14"><rect x="0" y="0" width="6.5" height="6.5" fill="#f01010"/><polygon points="4.3,3.3 12.4,5.6 9.4,7.6 13,11.4 11.4,12.9 7.7,9.2 5.6,11.8" fill="#333"/></svg>
<span class="t" style="left:770.5px;top:6px;font-size:12px;line-height:18px;height:18px;color:#12122a;letter-spacing:0.127px">Mode</span>
<svg style="left:802px;top:13.5px" width="6" height="3" viewBox="0 0 6 3"><polygon points="0,0 6,0 3.0,3" fill="#707078"/></svg>
<div style="left:817px;top:4px;width:22px;height:22px;background:#f4f4f8;border:1px solid #3b8df0"></div>
<svg style="left:821px;top:8px" width="15" height="15" viewBox="0 0 15 15"><path d="M1.5 6.5V1.5H5.5M3.5 3V6.5" stroke="#333" stroke-width="0.9" fill="none"/><circle cx="4.2" cy="3" r="1.2" fill="#18d018" stroke="#333" stroke-width="0.5"/><path d="M8.5 6.5V1.5H14" stroke="#333" stroke-width="0.9" fill="none"/><rect x="9.2" y="0.5" width="5.2" height="2" fill="#18e018"/><path d="M11 2.5V6.5" stroke="#333" stroke-width="0.9"/><path d="M1.5 14.5V9H6.5M3.5 10.5V14.5" stroke="#333" stroke-width="0.9" fill="none"/><polygon points="2,8.5 7,8.5 3.5,11.2 2,11.2" fill="#18e018"/><polygon points="10.3,9 10.3,13 11.4,12.1 12.3,14 13.2,13.6 12.3,11.8 13.7,11.6" fill="#555"/></svg>
<svg style="left:843px;top:8px" width="14" height="14" viewBox="0 0 14 14"><g stroke="#333" stroke-width="0.9" stroke-linejoin="round"><polygon points="0.5,1.5 1.5,0.7 10,0.7 13.5,4.6 3.5,4.6" fill="#fff"/><polygon points="0.5,1.5 3.5,4.6 3.5,13.3 0.5,10.5" fill="#fff"/><rect x="3.5" y="4.6" width="10" height="8.7" rx="0.8" fill="#fff"/></g><polygon points="7,6.5 7,10.8 8.1,9.9 9,11.8 9.9,11.4 9,9.6 10.4,9.4" fill="#444"/><ellipse cx="3.6" cy="2.6" rx="1.7" ry="1.2" fill="#18d018" stroke="#333" stroke-width="0.5"/></svg>
<svg style="left:865px;top:8px" width="14" height="14" viewBox="0 0 14 14"><g stroke="#333" stroke-width="0.9" stroke-linejoin="round"><polygon points="0.5,1.5 1.5,0.7 10,0.7 13.5,4.6 3.5,4.6" fill="#fff"/><polygon points="0.5,1.5 3.5,4.6 3.5,13.3 0.5,10.5" fill="#fff"/><rect x="3.5" y="4.6" width="10" height="8.7" rx="0.8" fill="#fff"/></g><polygon points="7,6.5 7,10.8 8.1,9.9 9,11.8 9.9,11.4 9,9.6 10.4,9.4" fill="#444"/><path d="M0.8 1.4L3.6 4.4" stroke="#18d018" stroke-width="2.2"/></svg>
<svg style="left:887px;top:8px" width="14" height="14" viewBox="0 0 14 14"><g stroke="#333" stroke-width="0.9" stroke-linejoin="round"><polygon points="0.5,1.5 1.5,0.7 10,0.7 13.5,4.6 3.5,4.6" fill="#18e018"/><polygon points="0.5,1.5 3.5,4.6 3.5,13.3 0.5,10.5" fill="#fff"/><rect x="3.5" y="4.6" width="10" height="8.7" rx="0.8" fill="#fff"/></g><polygon points="7,6.5 7,10.8 8.1,9.9 9,11.8 9.9,11.4 9,9.6 10.4,9.4" fill="#444"/></svg>
<svg style="left:909px;top:8px" width="14" height="14" viewBox="0 0 14 14"><g stroke="#333" stroke-width="0.9" stroke-linejoin="round"><polygon points="0.5,1.5 1.5,0.7 10,0.7 13.5,4.6 3.5,4.6" fill="#18e018"/><polygon points="0.5,1.5 3.5,4.6 3.5,13.3 0.5,10.5" fill="#18e018"/><rect x="3.5" y="4.6" width="10" height="8.7" rx="0.8" fill="#18e018"/></g><polygon points="7,6.5 7,10.8 8.1,9.9 9,11.8 9.9,11.4 9,9.6 10.4,9.4" fill="#444"/></svg>
<svg style="left:931px;top:8px" width="14" height="14" viewBox="0 0 14 14"><g stroke="#333" stroke-width="0.9" stroke-linejoin="round"><polygon points="0.5,1.5 1.5,0.7 10,0.7 13.5,4.6 3.5,4.6" fill="#fff"/><polygon points="0.5,1.5 3.5,4.6 3.5,13.3 0.5,10.5" fill="#fff"/><rect x="3.5" y="4.6" width="10" height="8.7" rx="0.6" fill="#fff"/></g><path d="M6.3 4.6V13.3M10.3 4.6V13.3M6.3 4.6L3.6 0.9M10.3 4.6L7.2 0.9" stroke="#3a8af0" stroke-width="1.1"/><path d="M8.3 4.6V13.3M3.5 8.9H13.5M8.3 4.6L5.4 0.9M2 2.6H11.7M0.5 6L3.5 8.9M1.9 3V12" stroke="#333" stroke-width="0.7" fill="none"/><ellipse cx="2.6" cy="2" rx="1.5" ry="0.9" fill="#18d018"/><path d="M3.5 4.6H13.5V13.3H3.5Z" stroke="#333" stroke-width="0.9" fill="none"/><polygon points="7.6,7 7.6,11 8.7,10.1 9.6,12 10.5,11.6 9.6,9.8 11,9.6" fill="#444"/></svg>
<svg style="left:953px;top:8px" width="14" height="14" viewBox="0 0 14 14"><g stroke="#333" stroke-width="0.9" stroke-linejoin="round"><polygon points="0.5,1.5 1.5,0.7 10,0.7 13.5,4.6 3.5,4.6" fill="#fff"/><polygon points="0.5,1.5 3.5,4.6 3.5,13.3 0.5,10.5" fill="#fff"/><rect x="3.5" y="4.6" width="10" height="8.7" rx="0.6" fill="#fff"/></g><path d="M6.3 4.6V13.3M10.3 4.6V13.3M6.3 4.6L3.6 0.9M10.3 4.6L7.2 0.9" stroke="#3a8af0" stroke-width="1.1"/><path d="M8.3 4.6V13.3M3.5 8.9H13.5M8.3 4.6L5.4 0.9M2 2.6H11.7M0.5 6L3.5 8.9M1.9 3V12" stroke="#333" stroke-width="0.7" fill="none"/><ellipse cx="3" cy="1.7" rx="1.2" ry="0.7" fill="#18d018"/><ellipse cx="6" cy="1.7" rx="1.2" ry="0.7" fill="#18d018"/><ellipse cx="9" cy="1.7" rx="1.2" ry="0.7" fill="#18d018"/><ellipse cx="5" cy="3.6" rx="1.2" ry="0.7" fill="#18d018"/><ellipse cx="8.5" cy="3.6" rx="1.2" ry="0.7" fill="#18d018"/><path d="M3.5 4.6H13.5V13.3H3.5Z" stroke="#333" stroke-width="0.9" fill="none"/><polygon points="7.6,7 7.6,11 8.7,10.1 9.6,12 10.5,11.6 9.6,9.8 11,9.6" fill="#444"/></svg>
<svg style="left:975px;top:8px" width="14" height="14" viewBox="0 0 14 14"><g stroke="#a0a0a0" stroke-width="0.9" stroke-linejoin="round"><polygon points="0.5,1.5 1.5,0.7 10,0.7 13.5,4.6 3.5,4.6" fill="#fff"/><polygon points="0.5,1.5 3.5,4.6 3.5,13.3 0.5,10.5" fill="#fff"/><rect x="3.5" y="4.6" width="10" height="8.7" rx="0.6" fill="#fff"/></g><path d="M6.3 4.6V13.3M10.3 4.6V13.3M6.3 4.6L3.6 0.9M10.3 4.6L7.2 0.9" stroke="#b8b8b8" stroke-width="1.1"/><path d="M8.3 4.6V13.3M3.5 8.9H13.5M8.3 4.6L5.4 0.9M2 2.6H11.7M0.5 6L3.5 8.9M1.9 3V12" stroke="#a0a0a0" stroke-width="0.7" fill="none"/><ellipse cx="3" cy="1.7" rx="1.2" ry="0.7" fill="#d0d0d0"/><ellipse cx="6" cy="1.7" rx="1.2" ry="0.7" fill="#d0d0d0"/><ellipse cx="9" cy="1.7" rx="1.2" ry="0.7" fill="#d0d0d0"/><ellipse cx="5" cy="3.6" rx="1.2" ry="0.7" fill="#d0d0d0"/><ellipse cx="8.5" cy="3.6" rx="1.2" ry="0.7" fill="#d0d0d0"/><path d="M3.5 4.6H13.5V13.3H3.5Z" stroke="#a0a0a0" stroke-width="0.9" fill="none"/><polygon points="7.6,7 7.6,11 8.7,10.1 9.6,12 10.5,11.6 9.6,9.8 11,9.6" fill="#999"/></svg>
<span class="t" style="left:996px;top:7px;font-size:6.5px;line-height:8px;height:8px;color:#707070;letter-spacing:0.3px">X,Y,Z</span>
<svg style="left:1002px;top:14px" width="8" height="9" viewBox="0 0 8 9"><polygon points="0.3,0.3 5.2,1.6 3.5,2.9 6.3,6.6 5,7.6 2.2,3.9 1.4,5.6" fill="#d8a010"/></svg>
<svg style="left:1019px;top:8px" width="15" height="14" viewBox="0 0 15 14"><polygon points="0.5,0.5 11.5,0.5 14,3.5 11.5,6.5 0.5,6.5" fill="#fff" stroke="#222" stroke-width="1"/><circle cx="3.2" cy="3.5" r="1.1" fill="none" stroke="#222" stroke-width="0.8"/><circle cx="6.2" cy="3.5" r="1.1" fill="none" stroke="#222" stroke-width="0.8"/><circle cx="9.2" cy="3.5" r="1.1" fill="none" stroke="#222" stroke-width="0.8"/><g transform="translate(4.5,6.2)"><polygon points="0.3,0.3 5.2,1.6 3.5,2.9 6.3,6.6 5,7.6 2.2,3.9 1.4,5.6" fill="#d8a010"/></g></svg>
<svg style="left:1041px;top:8px" width="15" height="14" viewBox="0 0 15 14"><polygon points="0.5,0.5 10.5,0.5 14,5.5 10.5,10.5 0.5,10.5" fill="#c6c6c6" stroke="#a4a4a4" stroke-width="1"/><path d="M10.5 10.8l2.6 2.6" stroke="#b0b0b0" stroke-width="1.3"/></svg>
<span class="t" style="left:1043px;top:9px;font-size:7px;line-height:9px;height:9px;color:#f2f2f2">Abc</span>
<div style="left:1061px;top:6px;width:1px;height:20px;background:#c6c6ce"></div>
<svg style="left:1069px;top:9px" width="15" height="13" viewBox="0 0 15 13"><path d="M1 7L5 4L8 6L13 1.5" stroke="#d8a010" stroke-width="1.4" fill="none"/><path d="M10.5 1h3v3" stroke="#d8a010" stroke-width="1.2" fill="none"/><path d="M1.5 10.5h12" stroke="#d8a010" stroke-width="1.2"/><circle cx="1.8" cy="10.5" r="1.4" fill="#d8a010"/><circle cx="7.5" cy="10.5" r="1.4" fill="#d8a010"/><circle cx="13" cy="10.5" r="1.4" fill="#d8a010"/></svg>
<div style="left:1089px;top:6px;width:1px;height:20px;background:#c6c6ce"></div>
<svg style="left:1097px;top:8px" width="14" height="14" viewBox="0 0 14 14"><rect x="0.5" y="0.5" width="13" height="13" fill="#e9c440" stroke="#3a3010" stroke-width="1"/><path d="M0.5 2.5h13" stroke="#3a3010" stroke-width="1"/><path d="M5 1.5h4" stroke="#3a3010" stroke-width="1"/></svg>
<span class="t" style="left:1114.5px;top:6px;font-size:12px;line-height:18px;height:18px;color:#12122a;letter-spacing:-0.045px">Clipboard</span>
<svg style="left:1168px;top:13.5px" width="6" height="3" viewBox="0 0 6 3"><polygon points="0,0 6,0 3.0,3" fill="#808088"/></svg>
<svg style="left:1200px;top:6px" width="9" height="8" viewBox="0 0 9 8"><path d="M1 0.8L4.5 3.6L8 0.8M1 4.2L4.5 7L8 4.2" stroke="#3a3a5a" stroke-width="1" fill="none"/></svg>
<svg style="left:1200px;top:19px" width="9" height="4" viewBox="0 0 9 4"><polygon points="0,0 9,0 4.5,4" fill="#000"/></svg>
<div style="left:367px;top:28px;width:845px;height:452px;background:linear-gradient(180deg,#6a8adc 0%,#ffffff 93.5%);overflow:hidden">
<svg style="left:0;top:0" width="845" height="452" viewBox="367 28 845 452"><path d="M533.00 433.50 A256.5 256.5 0 0 0 755.28 49.01 L733.62 61.48 A231.5 231.5 0 0 1 533.00 408.50 Z" fill="#7b8a9e" stroke="#c9d6e4" stroke-width="0.9"/><rect x="533" y="434" width="512.5" height="24" fill="#969696"/><rect x="533" y="457.6" width="512.5" height="1.2" fill="#e8e860"/><polygon points="594.5,446.5 616,446.5 621,457.5 616,468.5 594.5,468.5" fill="#ffff33" stroke="#222" stroke-width="1"/><path d="M533.5 433V386" stroke="#00b400" stroke-width="1.6"/><polygon points="533.5,373.5 530.3,388.5 536.7,388.5" fill="#00b400"/><path d="M533 433.3H581" stroke="#c80000" stroke-width="1.6"/><polygon points="592.5,433.3 579,430.2 579,436.4" fill="#c80000"/><circle cx="533" cy="433.3" r="2.6" fill="#00007a"/><text x="533" y="373" font-family="Liberation Sans,sans-serif" font-size="12" fill="#00c000">Y</text><text x="593" y="433" font-family="Liberation Sans,sans-serif" font-size="12" fill="#ff1010">X</text><text x="533.5" y="432.5" font-family="Liberation Sans,sans-serif" font-size="12" fill="#1010ff">Z</text><path d="M533 433.3H560" stroke="#c80000" stroke-width="1.6"/><circle cx="533" cy="433.3" r="2.6" fill="#00007a"/><text x="1141.8" y="416.8" font-family="Liberation Sans,sans-serif" font-size="12" fill="#1010ff">Z</text><path d="M1141 417V380" stroke="#007800" stroke-width="3.2"/><polygon points="1141,369.5 1136,381 1146,381" fill="#008a00"/><path d="M1141 417H1178" stroke="#c00000" stroke-width="3.2"/><polygon points="1188.5,417 1177,412.3 1177,421.7" fill="#d00000"/><defs><radialGradient id="gb" cx="0.4" cy="0.35" r="0.7"><stop offset="0" stop-color="#2020c0"/><stop offset="1" stop-color="#000070"/></radialGradient><radialGradient id="gc" cx="0.4" cy="0.35" r="0.7"><stop offset="0" stop-color="#40f0f0"/><stop offset="1" stop-color="#00a0a0"/></radialGradient></defs><circle cx="1140.8" cy="417" r="4.6" fill="url(#gb)"/><circle cx="1163" cy="394.6" r="4.7" fill="url(#gc)"/><text x="1141" y="362" font-family="Liberation Sans,sans-serif" font-size="12" fill="#00a000">Y</text><text x="1196.3" y="417.3" font-family="Liberation Sans,sans-serif" font-size="12" fill="#ff1010">X</text><rect x="1093" y="94.2" width="109.5" height="1.6" fill="#fff" opacity="0.92"/></svg>
<span class="t" style="left:16.5px;top:16px;font-size:12.8px;line-height:17px;height:17px;color:#000;font-weight:bold;letter-spacing:-0.123px;">A: Static Structural</span>
<span class="t" style="left:16.5px;top:33px;font-size:12.8px;line-height:17px;height:17px;color:#000;letter-spacing:-0.004px;">Displacement</span>
<span class="t" style="left:16.5px;top:50px;font-size:12.8px;line-height:17px;height:17px;color:#000;letter-spacing:-0.213px;">Time: 3. s</span>
<div style="left:17px;top:85px;width:18px;height:18px;background:#ffff33;border:1px solid #333"></div>
<span class="t" style="left:40.30000000000001px;top:84px;font-size:12.8px;line-height:17px;height:17px;color:#000;letter-spacing:-0.01px;">Displacement: Deactivated</span>
<span class="t" style="left:40.30000000000001px;top:101px;font-size:12.8px;line-height:17px;height:17px;color:#000;letter-spacing:-0.034px;">Components: Free,0. mm</span>
<span class="t lg" style="left:726.0px;top:3px;font-size:37px;line-height:40px;height:40px;color:#fff;font-weight:bold;letter-spacing:-0.9px">Ansys</span>
<svg style="left:723px;top:6px" width="40" height="34" viewBox="1090 34 40 34"><defs><linearGradient id="bgm" gradientUnits="userSpaceOnUse" x1="0" y1="28" x2="0" y2="450.62"><stop offset="0" stop-color="#6a8adc"/><stop offset="1" stop-color="#ffffff"/></linearGradient></defs><polygon points="1109.0,45.6 1102.3,63.6 1115.7,63.6" fill="url(#bgm)"/><path d="M1112.6 36.5L1108.9 46.4" stroke="url(#bgm)" stroke-width="0.9"/></svg>
<span class="t" style="left:769.5999999999999px;top:44.599999999999994px;font-size:17px;line-height:20px;height:20px;color:#fff;font-weight:bold;transform-origin:0 50%;transform:scaleX(1.08)">2024 R2</span>
<span class="t" style="left:735.2px;top:72.7px;font-size:17px;line-height:20px;height:20px;color:#fff;font-weight:bold;letter-spacing:0.3px;transform-origin:0 50%;transform:scaleX(1.1)">STUDENT</span>
</div>
<div style="left:367px;top:484px;width:845px;height:20px;border-top:1px solid #c8cce0;border-left:1px solid #c8cce0;border-right:1px solid #c8cce0"></div>
<span class="t" style="left:372.5px;top:485px;font-size:11.5px;letter-spacing:-0.155px;color:#1e1e3c;line-height:18px;height:18px">Tabular Data</span>
<svg style="left:443px;top:491px" width="717" height="5" shape-rendering="crispEdges"><rect width="717" height="5" fill="url(#dp)"/></svg>
<svg style="position:absolute;left:1162.2px;top:492px" width="8.6" height="4.6" viewBox="0 0 8.6 4.6"><polygon points="0,0 8.6,0 4.3,4.6" fill="#000"/></svg><svg style="position:absolute;left:1177.9px;top:488px" width="9" height="12" viewBox="0 0 9 12"><path d="M2.5 7V1H6.5V7M5.5 1V7M0.5 7.5H8.5M4.5 8V11.6" stroke="#000" stroke-width="1" fill="none"/></svg><svg style="position:absolute;left:1194.2px;top:488.5px" width="10" height="10" viewBox="0 0 10 10"><path d="M1 1L9 9M9 1L1 9" stroke="#000" stroke-width="1.4"/></svg>
<div style="left:368px;top:504px;width:844px;height:98px;background:#a0a0a0"></div>
<div style="left:368px;top:504px;width:14px;height:18px;background:#f4f4f4;border-right:1px solid #6a6a6a;border-bottom:1px solid #6a6a6a;border-top:1px solid #fff;border-left:1px solid #fff;"></div>
<div style="left:382px;top:504px;width:37px;height:18px;background:#f4f4f4;border-right:1px solid #6a6a6a;border-bottom:1px solid #6a6a6a;border-top:1px solid #fff;border-left:1px solid #fff;"></div>
<span class="t" style="left:385.6px;top:503px;font-size:11.5px;letter-spacing:-0.652px;line-height:18px;height:18px;color:#000">Steps</span>
<div style="left:419px;top:504px;width:47px;height:18px;background:#f4f4f4;border-right:1px solid #6a6a6a;border-bottom:1px solid #6a6a6a;border-top:1px solid #fff;border-left:1px solid #fff;"></div>
<span class="t" style="left:422.6px;top:503px;font-size:11.5px;letter-spacing:-0.438px;line-height:18px;height:18px;color:#000">Time [s]</span>
<div style="left:466px;top:504px;width:60px;height:18px;background:#f4f4f4;border-right:1px solid #6a6a6a;border-bottom:1px solid #6a6a6a;border-top:1px solid #fff;border-left:1px solid #fff;"></div>
<span class="t" style="left:488.2px;top:503px;font-size:11.5px;letter-spacing:-0.75px;line-height:18px;height:18px;color:#c00020">Y [mm]</span>
<div style="left:368px;top:522px;width:14px;height:15px;background:#f4f4f4;border-right:1px solid #6a6a6a;border-bottom:1px solid #6a6a6a;border-top:1px solid #fff;border-left:1px solid #fff;"></div>
<span class="t" style="left:370.8px;top:523px;font-size:11.5px;letter-spacing:0px;line-height:15px;height:15px;color:#000">1</span>
<div style="left:382px;top:522px;width:37px;height:15px;background:#f4f4f4;border-right:1px solid #6a6a6a;border-bottom:1px solid #6a6a6a;border-top:1px solid #fff;border-left:1px solid #fff;"></div>
<span class="t" style="left:385.6px;top:523px;font-size:11.5px;letter-spacing:0px;line-height:15px;height:15px;color:#000">1</span>
<div style="left:419px;top:522px;width:47px;height:15px;background:#fff;border-right:1px solid #c4c4c4;border-bottom:1px solid #c4c4c4;"></div>
<span class="t" style="left:422.6px;top:523px;font-size:11.5px;letter-spacing:0px;line-height:15px;height:15px;color:#000">0.</span>
<div style="left:466px;top:522px;width:60px;height:15px;background:#fff;border-right:1px solid #c4c4c4;border-bottom:1px solid #c4c4c4;"></div>
<span class="t" style="left:469.6px;top:523px;font-size:11.5px;letter-spacing:0px;line-height:15px;height:15px;color:#000">= 0.</span>
<div style="left:368px;top:537px;width:14px;height:15px;background:#f4f4f4;border-right:1px solid #6a6a6a;border-bottom:1px solid #6a6a6a;border-top:1px solid #fff;border-left:1px solid #fff;"></div>
<span class="t" style="left:370.8px;top:538px;font-size:11.5px;letter-spacing:0px;line-height:15px;height:15px;color:#000">2</span>
<div style="left:382px;top:537px;width:37px;height:15px;background:#f4f4f4;border-right:1px solid #6a6a6a;border-bottom:1px solid #6a6a6a;border-top:1px solid #fff;border-left:1px solid #fff;"></div>
<span class="t" style="left:385.6px;top:538px;font-size:11.5px;letter-spacing:0px;line-height:15px;height:15px;color:#000">1</span>
<div style="left:419px;top:537px;width:47px;height:15px;background:#fff;border-right:1px solid #c4c4c4;border-bottom:1px solid #c4c4c4;"></div>
<span class="t" style="left:422.6px;top:538px;font-size:11.5px;letter-spacing:0px;line-height:15px;height:15px;color:#000">1.</span>
<div style="left:466px;top:537px;width:60px;height:15px;background:#fff;border-right:1px solid #c4c4c4;border-bottom:1px solid #c4c4c4;"></div>
<span class="t" style="left:469.6px;top:538px;font-size:11.5px;letter-spacing:0px;line-height:15px;height:15px;color:#000">0.</span>
<div style="left:368px;top:552px;width:14px;height:15px;background:#f4f4f4;border-right:1px solid #6a6a6a;border-bottom:1px solid #6a6a6a;border-top:1px solid #fff;border-left:1px solid #fff;"></div>
<span class="t" style="left:370.8px;top:553px;font-size:11.5px;letter-spacing:0px;line-height:15px;height:15px;color:#000">3</span>
<div style="left:382px;top:552px;width:37px;height:15px;background:#f4f4f4;border-right:1px solid #6a6a6a;border-bottom:1px solid #6a6a6a;border-top:1px solid #fff;border-left:1px solid #fff;"></div>
<span class="t" style="left:385.6px;top:553px;font-size:11.5px;letter-spacing:0px;line-height:15px;height:15px;color:#000">2</span>
<div style="left:419px;top:552px;width:47px;height:15px;background:#fff;border-right:1px solid #c4c4c4;border-bottom:1px solid #c4c4c4;"></div>
<span class="t" style="left:422.6px;top:553px;font-size:11.5px;letter-spacing:0px;line-height:15px;height:15px;color:#000">2.</span>
<div style="left:466px;top:552px;width:60px;height:15px;background:#fff;border-right:1px solid #c4c4c4;border-bottom:1px solid #c4c4c4;"></div>
<span class="t" style="left:469.6px;top:553px;font-size:11.5px;letter-spacing:0px;line-height:15px;height:15px;color:#000">= 0.</span>
<div style="left:368px;top:567px;width:14px;height:15px;background:#f4f4f4;border-right:1px solid #6a6a6a;border-bottom:1px solid #6a6a6a;border-top:1px solid #fff;border-left:1px solid #fff;"></div>
<span class="t" style="left:370.8px;top:568px;font-size:11.5px;letter-spacing:0px;line-height:15px;height:15px;color:#000">4</span>
<div style="left:382px;top:567px;width:37px;height:15px;background:#f4f4f4;border-right:1px solid #6a6a6a;border-bottom:1px solid #6a6a6a;border-top:1px solid #fff;border-left:1px solid #fff;"></div>
<span class="t" style="left:385.6px;top:568px;font-size:11.5px;letter-spacing:0px;line-height:15px;height:15px;color:#000">3</span>
<div style="left:419px;top:567px;width:47px;height:15px;background:#fff;border-right:1px solid #c4c4c4;border-bottom:1px solid #c4c4c4;"></div>
<span class="t" style="left:422.6px;top:568px;font-size:11.5px;letter-spacing:0px;line-height:15px;height:15px;color:#000">3.</span>
<div style="left:466px;top:567px;width:60px;height:15px;background:#00d4d4;border-right:1px solid #c4c4c4;border-bottom:1px solid #c4c4c4;"></div>
<span class="t" style="left:469.6px;top:568px;font-size:11.5px;letter-spacing:0px;line-height:15px;height:15px;color:#000">= 0.</span>
<div style="left:368px;top:582px;width:14px;height:15px;background:#f4f4f4;border-right:1px solid #6a6a6a;border-bottom:1px solid #6a6a6a;border-top:1px solid #fff;border-left:1px solid #fff;"></div>
<span class="t" style="left:370.8px;top:583px;font-size:11.5px;letter-spacing:0px;line-height:15px;height:15px;color:#000">*</span>
<div style="left:382px;top:582px;width:37px;height:15px;background:#f4f4f4;border-right:1px solid #6a6a6a;border-bottom:1px solid #6a6a6a;border-top:1px solid #fff;border-left:1px solid #fff;"></div>
<div style="left:419px;top:582px;width:47px;height:15px;background:#fff;border-right:1px solid #c4c4c4;border-bottom:1px solid #c4c4c4;"></div>
<div style="left:466px;top:582px;width:60px;height:15px;background:#fff;border-right:1px solid #c4c4c4;border-bottom:1px solid #c4c4c4;"></div>
<div style="left:470px;top:506px;width:13px;height:13px;background:#fff;border:1px solid #808080;border-right-color:#e8e8e8;border-bottom-color:#e8e8e8;box-shadow:inset 1px 1px 0 #5a5a5a"></div>
<svg style="left:472px;top:508px" width="9" height="9" viewBox="0 0 9 9"><path d="M1 4L3.5 6.5L8 1.5" stroke="#000" stroke-width="1.8" fill="none"/></svg>
<div style="left:0;top:602px;width:1213px;height:1px;background:#5a9cd8"></div><div style="left:0;top:603px;width:1213px;height:1px;background:#0a78d4"></div>
<div style="left:1212px;top:3px;width:1px;height:599px;background:#f6f6f8"></div>
</body></html>
